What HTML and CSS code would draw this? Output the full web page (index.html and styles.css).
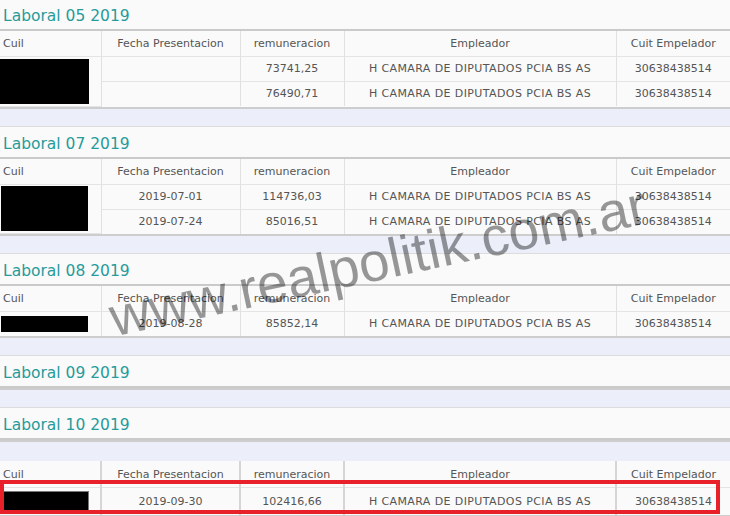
FILE: index.html
```html
<!DOCTYPE html>
<html lang="es">
<head>
    <meta charset="UTF-8">
    <meta name="viewport" content="width=device-width, initial-scale=1.0">
    <title>Laboral 2019</title>
    <link rel="stylesheet" href="styles.css">
</head>
<body>

<div class="page">

    <section class="panel first">
        <h2 class="panel-title">Laboral 05 2019</h2>
        <table class="grid">
            <colgroup>
                <col class="c1"><col class="c2"><col class="c3"><col class="c4"><col class="c5">
            </colgroup>
            <thead>
                <tr><th class="left">Cuil</th><th>Fecha Presentacion</th><th>remuneracion</th><th>Empleador</th><th>Cuit Empelador</th></tr>
            </thead>
            <tbody>
                <tr>
                    <td rowspan="2" class="cuil"><span class="redact big"></span></td>
                    <td></td><td>73741,25</td><td class="emp">H CAMARA DE DIPUTADOS PCIA BS AS</td><td>30638438514</td>
                </tr>
                <tr>
                    <td></td><td>76490,71</td><td class="emp">H CAMARA DE DIPUTADOS PCIA BS AS</td><td>30638438514</td>
                </tr>
            </tbody>
        </table>
    </section>

    <section class="panel">
        <h2 class="panel-title">Laboral 07 2019</h2>
        <table class="grid">
            <colgroup>
                <col class="c1"><col class="c2"><col class="c3"><col class="c4"><col class="c5">
            </colgroup>
            <thead>
                <tr><th class="left">Cuil</th><th>Fecha Presentacion</th><th>remuneracion</th><th>Empleador</th><th>Cuit Empelador</th></tr>
            </thead>
            <tbody>
                <tr>
                    <td rowspan="2" class="cuil"><span class="redact big narrow"></span></td>
                    <td>2019-07-01</td><td>114736,03</td><td class="emp">H CAMARA DE DIPUTADOS PCIA BS AS</td><td>30638438514</td>
                </tr>
                <tr>
                    <td>2019-07-24</td><td>85016,51</td><td class="emp">H CAMARA DE DIPUTADOS PCIA BS AS</td><td>30638438514</td>
                </tr>
            </tbody>
        </table>
    </section>

    <section class="panel">
        <h2 class="panel-title">Laboral 08 2019</h2>
        <table class="grid">
            <colgroup>
                <col class="c1"><col class="c2"><col class="c3"><col class="c4"><col class="c5">
            </colgroup>
            <thead>
                <tr><th class="left">Cuil</th><th>Fecha Presentacion</th><th>remuneracion</th><th>Empleador</th><th>Cuit Empelador</th></tr>
            </thead>
            <tbody>
                <tr>
                    <td class="cuil"><span class="redact slim narrow"></span></td>
                    <td>2019-08-28</td><td>85852,14</td><td class="emp">H CAMARA DE DIPUTADOS PCIA BS AS</td><td>30638438514</td>
                </tr>
            </tbody>
        </table>
    </section>

    <section class="panel">
        <h2 class="panel-title">Laboral 09 2019</h2>
    </section>

    <section class="panel loose">
        <h2 class="panel-title">Laboral 10 2019</h2>
    </section>

    <div class="panel table-only">
        <table class="grid strong">
            <colgroup>
                <col class="c1"><col class="c2"><col class="c3"><col class="c4"><col class="c5">
            </colgroup>
            <thead>
                <tr><th class="left">Cuil</th><th>Fecha Presentacion</th><th>remuneracion</th><th>Empleador</th><th>Cuit Empelador</th></tr>
            </thead>
            <tbody>
                <tr>
                    <td class="cuil"><span class="redact mid"></span></td>
                    <td>2019-09-30</td><td>102416,66</td><td class="emp">H CAMARA DE DIPUTADOS PCIA BS AS</td><td>30638438514</td>
                </tr>
            </tbody>
        </table>
        <!-- red annotation box over the last row -->
        <div class="mark"></div>
    </div>

    <div class="watermark">www.realpolitik.com.ar</div>

</div>

</body>
</html>
```

FILE: styles.css
```css
body {
    margin: 0;
    background-color: #eceffa;
    font-family: "DejaVu Sans", Verdana, sans-serif;
    font-size: 11px;
    color: #555;
    overflow: hidden;
}

.page {
    position: relative;
    width: 730px;
    height: 516px;
    overflow: hidden;
}

.panel {
    background-color: #fafafa;
    border-top: 1px solid #dcdcdc;
    border-bottom: 2px solid #cdcdcd;
    margin-bottom: 17px;
}

.panel.first {
    margin-top: -2px;
}

.panel.loose {
    margin-bottom: 19px;
}

.panel-title {
    margin: 0;
    padding: 4px 0 0 3px;
    height: 26px;
    line-height: 26px;
    font-size: 15.5px;
    font-weight: normal;
    color: #279b9b;
    border-bottom: 2px solid #cacaca;
}

.grid {
    width: 100%;
    table-layout: fixed;
    border-collapse: collapse;
}

.c1 { width: 101px; }
.c2 { width: 139px; }
.c3 { width: 104px; }
.c4 { width: 272px; }
.c5 { width: 114px; }

.grid th,
.grid td {
    padding: 5px 0;
    line-height: 14px;
    text-align: center;
    font-weight: normal;
    white-space: nowrap;
    border-right: 1px solid #e0e0e0;
    border-bottom: 1px solid #e4e4e4;
}

.grid th {
    padding: 6px 0 5px;
}

.grid th:last-child,
.grid td:last-child {
    border-right: none;
}

.grid tbody tr:last-child td {
    border-bottom: none;
}

.grid .emp {
    letter-spacing: 0.4px;
}

.redact {
    display: block;
    width: 89px;
    background-color: #000;
}

.redact.narrow {
    width: 87px;
    margin-left: 1px;
}

.redact.big {
    height: 45px;
}

.redact.slim {
    height: 16px;
}

.redact.mid {
    height: 22px;
    border: 1px solid #777;
    width: 88px;
    box-sizing: border-box;
    margin-left: 1px;
}

.table-only {
    position: relative;
    border-top: none;
}

.grid.strong th,
.grid.strong td {
    border-right: 2px solid #d6d6d6;
}

.grid.strong th {
    padding: 7px 0 5px;
}

.grid.strong td {
    padding: 7px 0 6px;
}

.grid.strong th:last-child,
.grid.strong td:last-child {
    border-right: none;
}

.grid th.left {
    text-align: left;
    padding-left: 3px;
}

.grid td.cuil {
    padding: 0;
    text-align: left;
}

.mark {
    position: absolute;
    left: 0;
    top: 19px;
    width: 720px;
    height: 34px;
    border: 4px solid #e8202a;
    box-sizing: border-box;
}

.watermark {
    position: absolute;
    left: 378px;
    top: 261px;
    transform: translate(-50%, -50%) rotate(-12deg);
    font-family: "Liberation Sans", Arial, sans-serif;
    font-size: 55px;
    color: rgba(0, 0, 0, 0.4);
    white-space: nowrap;
    pointer-events: none;
}
```
